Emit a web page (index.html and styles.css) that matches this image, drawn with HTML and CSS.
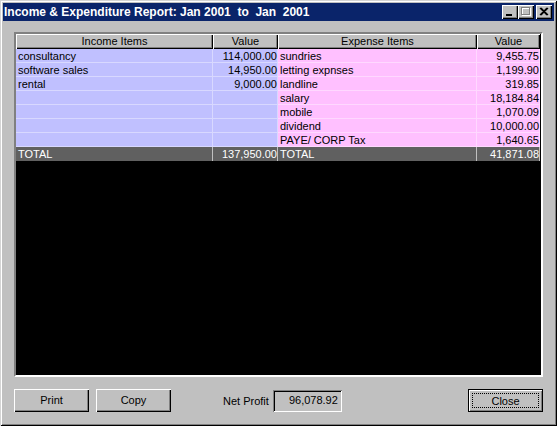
FILE: index.html
```html
<!DOCTYPE html>
<html>
<head>
<meta charset="utf-8">
<link rel="stylesheet" href="styles.css">
</head>
<body>
<div class="window">
  <div class="titlebar">
    <span class="title">Income &amp; Expenditure Report: Jan 2001  to  Jan  2001</span>
    <div class="tbtns">
      <span class="tbtn"><svg width="16" height="14" viewBox="0 0 16 14"><rect x="4" y="9" width="6" height="2" fill="#000"/></svg></span>
      <span class="tbtn"><svg width="16" height="14" viewBox="0 0 16 14"><rect x="4.5" y="3.5" width="8" height="7" fill="none" stroke="#fff"/><rect x="3.5" y="2.5" width="8" height="7" fill="none" stroke="#808080"/><rect x="3" y="2" width="9" height="1" fill="#808080"/></svg></span>
      <span class="tbtn close"><svg width="16" height="14" viewBox="0 0 16 14"><path d="M4 3 L11 10 M5 3 L12 10 M11 3 L4 10 M12 3 L5 10" stroke="#000" stroke-width="1.2"/></svg></span>
    </div>
  </div>
  <div class="client">
    <div class="report">
      <div class="grid">
        <div class="hd">Income Items</div>
        <div class="hd">Value</div>
        <div class="hd">Expense Items</div>
        <div class="hd">Value</div>

        <div class="c inc">consultancy</div><div class="c inc num">114,000.00</div><div class="c exp">sundries</div><div class="c exp num">9,455.75</div>
        <div class="c inc">software sales</div><div class="c inc num">14,950.00</div><div class="c exp">letting expnses</div><div class="c exp num">1,199.90</div>
        <div class="c inc">rental</div><div class="c inc num">9,000.00</div><div class="c exp">landline</div><div class="c exp num">319.85</div>
        <div class="c inc"></div><div class="c inc num"></div><div class="c exp">salary</div><div class="c exp num">18,184.84</div>
        <div class="c inc"></div><div class="c inc num"></div><div class="c exp">mobile</div><div class="c exp num">1,070.09</div>
        <div class="c inc"></div><div class="c inc num"></div><div class="c exp">dividend</div><div class="c exp num">10,000.00</div>
        <div class="c inc"></div><div class="c inc num"></div><div class="c exp">PAYE/ CORP Tax</div><div class="c exp num">1,640.65</div>

        <div class="c tot">TOTAL</div><div class="c tot num">137,950.00</div><div class="c tot">TOTAL</div><div class="c tot num">41,871.08</div>
      </div>
    </div>
    <div class="actions">
      <button class="btn">Print</button>
      <button class="btn copy">Copy</button>
      <span class="np-label">Net Profit</span>
      <span class="np-box">96,078.92</span>
      <button class="btn default"><span class="focus">Close</span></button>
    </div>
  </div>
</div>
</body>
</html>
```
FILE: styles.css
```css
html, body {
  margin: 0;
  padding: 0;
  background: #c0c0c0;
}
.window {
  width: 557px;
  height: 426px;
  box-sizing: border-box;
  padding: 3px;
  background: #c0c0c0;
  box-shadow: inset 1px 1px #d4d4d4, inset -1px -1px #000, inset 2px 2px #fff, inset -2px -2px #808080;
  display: flex;
  flex-direction: column;
  font-family: "Liberation Sans", Arial, sans-serif;
}
.titlebar {
  height: 18px;
  background: #0a246a;
  display: flex;
  align-items: center;
  justify-content: space-between;
  padding: 0 2px 0 1px;
}
.title {
  color: #fff;
  font-weight: bold;
  font-size: 12px;
  white-space: pre;
}
.tbtns {
  display: flex;
  align-items: center;
}
.tbtn {
  width: 16px;
  height: 14px;
  background: #c0c0c0;
  box-shadow: inset 1px 1px #fff, inset -1px -1px #000, inset -2px -2px #808080;
  display: block;
}
.tbtn svg { display: block; }
.tbtn.close { margin-left: 2px; }
.client {
  flex: 1;
  padding: 11px 11px 0 11px;
  display: flex;
  flex-direction: column;
}
.report {
  height: 345px;
  box-sizing: border-box;
  border-style: solid;
  border-width: 2px;
  border-color: #808080 #fff #fff #808080;
  background: #000;
  box-shadow: inset 1px 1px #000;
}
.grid {
  display: grid;
  grid-template-columns: 197px 65px 199px 63px;
  grid-auto-rows: 14px;
  grid-template-rows: 15px;
  font-size: 11px;
  line-height: 14px;
}
.hd {
  background: #c0c0c0;
  text-align: center;
  color: #000;
  box-shadow: inset 1px 1px #fff, inset -1px -1px #000, inset -2px -2px #808080;
  line-height: 15px;
}
.c {
  padding: 0 2px;
  white-space: nowrap;
  overflow: hidden;
  color: #000;
}
.num { text-align: right; padding-right: 1px; }
.inc {
  background: #c0c0ff;
  box-shadow: inset 0 -1px #d8d8ff, inset -1px 0 #d8d8ff;
}
.exp {
  background: #ffc0ff;
  box-shadow: inset 0 -1px #ffd8ff, inset -1px 0 #ffd8ff;
}
.tot {
  background: #606060;
  color: #fff;
  box-shadow: inset -1px 0 #c0c0c0;
}
.actions {
  margin-top: 12px;
  height: 23px;
  display: flex;
  align-items: center;
  font-size: 11px;
}
.btn {
  width: 75px;
  height: 23px;
  margin: 0;
  padding: 0 0 2px 0;
  border: none;
  background: #c0c0c0;
  font-family: "Liberation Sans", Arial, sans-serif;
  font-size: 11px;
  color: #000;
  box-shadow: inset 1px 1px #fff, inset -1px -1px #000, inset -2px -2px #808080;
}
.btn.copy { margin-left: 7px; }
.np-label { margin-left: 52px; }
.np-box {
  margin-left: 4px;
  width: 69px;
  height: 22px;
  box-sizing: border-box;
  text-align: right;
  padding-right: 4px;
  line-height: 21px;
  box-shadow: inset 1px 1px #808080, inset -1px -1px #fff, inset 2px 2px #000, inset -2px -2px #c0c0c0;
}
.btn.default {
  margin-left: auto;
  width: 75px;
  border: 1px solid #000;
  padding: 3px;
  box-shadow: inset 1px 1px #fff, inset -1px -1px #808080;
}
.focus {
  display: flex;
  align-items: center;
  justify-content: center;
  height: 100%;
  box-sizing: border-box;
  border: 1px dotted #000;
}
```
